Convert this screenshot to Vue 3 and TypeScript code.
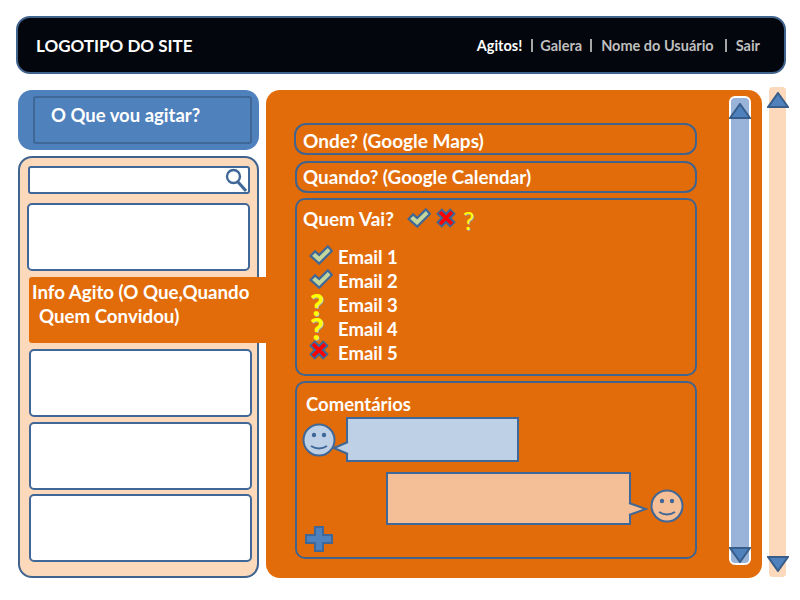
<script setup lang="ts">
// Mockup of the event page: header, left event list, event details with comments
type Status = 'yes' | 'no' | 'maybe'

const guests: { email: string; status: Status }[] = [
  { email: 'Email 1', status: 'yes' },
  { email: 'Email 2', status: 'yes' },
  { email: 'Email 3', status: 'maybe' },
  { email: 'Email 4', status: 'maybe' },
  { email: 'Email 5', status: 'no' },
]
</script>

<template>
  <div class="page">
    <header class="header">
      <div class="logo">LOGOTIPO DO SITE</div>
      <nav class="nav">
        <span class="active">Agitos!</span>
        <i class="sep first"></i>
        <span>Galera</span>
        <i class="sep"></i>
        <span class="user">Nome do Usuário</span>
        <i class="sep wide"></i>
        <span>Sair</span>
      </nav>
    </header>

    <div class="body">
      <aside class="left">
        <div class="new-box">
          <div class="new-inner">O Que vou agitar?</div>
        </div>
        <div class="panel">
          <div class="search">
            <svg class="lens" width="22" height="24" viewBox="0 0 22 24">
              <circle cx="8.5" cy="8.5" r="6.5" fill="none" stroke="#3f6797" stroke-width="2.4" />
              <path d="M13 14 L21 23" stroke="#3f6797" stroke-width="3" />
            </svg>
          </div>
          <div class="item first-item"></div>
          <div class="tab">
            Info Agito (O Que,Quando<br />
            <span class="tab-second">Quem Convidou)</span>
          </div>
          <div class="item"></div>
          <div class="item"></div>
          <div class="item last-item"></div>
        </div>
      </aside>

      <main class="main">
        <div class="content">
          <section class="pill where">Onde? (Google Maps)</section>
          <section class="pill when">Quando? (Google Calendar)</section>
          <section class="box who">
            <div class="who-title">
              <span>Quem Vai?</span>
              <svg class="check top-check" width="24" height="20" viewBox="0 0 26 22">
                <path d="M1.5 12 L6.5 7 L11 11 L20.5 1.5 L25 6.5 L11 20.5 Z" fill="#c3d69b" stroke="#3f6797" stroke-width="2.4" />
              </svg>
              <svg class="cross" width="22" height="22" viewBox="0 0 22 22">
                <path d="M4 4 L18 18 M18 4 L4 18" stroke="#3f6797" stroke-width="8" />
                <path d="M5 5 L17 17 M17 5 L5 17" stroke="#f00" stroke-width="3.6" />
              </svg>
              <span class="question thin">?</span>
            </div>
            <ul class="guests">
              <li v-for="g in guests" :key="g.email" class="guest">
                <span class="guest-icon" :class="g.status">
                  <svg v-if="g.status === 'yes'" width="24" height="20" viewBox="0 0 26 22">
                    <path d="M1.5 12 L6.5 7 L11 11 L20.5 1.5 L25 6.5 L11 20.5 Z" fill="#c3d69b" stroke="#3f6797" stroke-width="2.4" />
                  </svg>
                  <svg v-else-if="g.status === 'no'" width="22" height="22" viewBox="0 0 22 22">
                    <path d="M4 4 L18 18 M18 4 L4 18" stroke="#3f6797" stroke-width="8" />
                    <path d="M5 5 L17 17 M17 5 L5 17" stroke="#f00" stroke-width="3.6" />
                  </svg>
                  <span v-else class="question">?</span>
                </span>
                {{ g.email }}
              </li>
            </ul>
          </section>
          <section class="box comments">
            <div class="comments-title">Comentários</div>
            <div class="comment-row mine">
              <svg class="smile" width="34" height="34" viewBox="0 0 34 34">
                <circle cx="17" cy="17" r="15.5" fill="#bdd0e6" stroke="#3f6797" stroke-width="2" />
                <circle cx="12" cy="12" r="2.2" fill="#3f6797" />
                <circle cx="22" cy="12" r="2.2" fill="#3f6797" />
                <path d="M9 23 Q17 28 25 23" fill="none" stroke="#3f6797" stroke-width="2" />
              </svg>
              <div class="bubble blue">
                <svg class="tail tail-left" width="16" height="16" viewBox="0 0 16 16">
                  <path d="M15 2 L1 8 L15 14" fill="#bdd0e6" stroke="#3f6797" stroke-width="2" />
                </svg>
              </div>
            </div>
            <div class="comment-row theirs">
              <div class="bubble peach">
                <svg class="tail tail-right" width="20" height="16" viewBox="0 0 20 16">
                  <path d="M1 2 L18 8 L1 14" fill="#f4bf96" stroke="#3f6797" stroke-width="2" />
                </svg>
              </div>
              <svg class="smile" width="34" height="34" viewBox="0 0 34 34">
                <circle cx="17" cy="17" r="15.5" fill="#f4bf96" stroke="#3f6797" stroke-width="2" />
                <circle cx="12" cy="12" r="2.2" fill="#3f6797" />
                <circle cx="22" cy="12" r="2.2" fill="#3f6797" />
                <path d="M9 23 Q17 28 25 23" fill="none" stroke="#3f6797" stroke-width="2" />
              </svg>
            </div>
            <svg class="plus" width="28" height="26" viewBox="0 0 28 26">
              <path d="M10 1 H18 V9 H27 V17 H18 V25 H10 V17 H1 V9 H10 Z" fill="#4f81bd" stroke="#3f6797" stroke-width="2" />
            </svg>
          </section>
        </div>
        <div class="inner-scroll">
          <svg class="arrow" width="22" height="16" viewBox="0 0 22 16">
            <path d="M11 1 L21 15 H1 Z" fill="#4f81bd" stroke="#385d8a" stroke-width="2" />
          </svg>
          <svg class="arrow" width="22" height="16" viewBox="0 0 22 16">
            <path d="M11 15 L21 1 H1 Z" fill="#4f81bd" stroke="#385d8a" stroke-width="2" />
          </svg>
        </div>
      </main>

      <div class="outer-scroll">
        <svg class="arrow" width="22" height="16" viewBox="0 0 22 16">
          <path d="M11 1 L21 15 H1 Z" fill="#4f81bd" stroke="#385d8a" stroke-width="2" />
        </svg>
        <svg class="arrow" width="22" height="16" viewBox="0 0 22 16">
          <path d="M11 15 L21 1 H1 Z" fill="#4f81bd" stroke="#385d8a" stroke-width="2" />
        </svg>
      </div>
    </div>
  </div>
</template>

<style>
html,
body {
  margin: 0;
  background: #fff;
}
</style>

<style scoped>
.page {
  width: 800px;
  height: 600px;
  box-sizing: border-box;
  padding: 16px 14px 0 16px;
  font-family: Lato, "Liberation Sans", sans-serif;
  font-weight: 700;
  color: #fff;
  overflow: hidden;
}

/* Header bar */
.header {
  height: 58px;
  box-sizing: border-box;
  background: #03060c;
  border: 2px solid #41648f;
  border-radius: 14px;
  display: flex;
  align-items: center;
  justify-content: space-between;
  padding: 0 24px 0 18px;
}

.logo {
  font-size: 17px;
}

.nav {
  display: flex;
  align-items: center;
  font-size: 14.5px;
  color: #bfbfbf;
}

.nav .active {
  color: #fff;
}

.sep {
  width: 2px;
  height: 13px;
  background: #a6a6a6;
  margin: 0 9px 0 8px;
}

.sep.first {
  margin: 0 7px 0 9px;
}

.sep.wide {
  margin: 0 9px 0 11px;
}

.body {
  display: flex;
  align-items: flex-start;
  margin-top: -3px;
  position: relative;
}

/* Left column */
.left {
  width: 241px;
  margin: 19px 0 0 2px;
  flex: none;
}

.new-box {
  background: #4f81bd;
  height: 60px;
  box-sizing: border-box;
  border-radius: 14px;
  padding: 6px 7px 6px 15px;
}

.new-inner {
  height: 48px;
  box-sizing: border-box;
  border: 2px solid #3f6797;
  border-radius: 3px;
  padding: 6px 16px;
  font-size: 18.5px;
  color: #fff;
}

.panel {
  margin-top: 6px;
  height: 422px;
  box-sizing: border-box;
  background: #fcd9bb;
  border: 2px solid #41648f;
  border-radius: 14px;
  padding: 8px 5px 0 8px;
  display: flex;
  flex-direction: column;
}

.search {
  height: 28px;
  width: 222px;
  box-sizing: border-box;
  background: #fff;
  border: 2px solid #3f6797;
  border-radius: 3px;
  display: flex;
  justify-content: flex-end;
  align-items: center;
  padding-right: 1px;
}

.item {
  width: 223px;
  height: 68px;
  box-sizing: border-box;
  flex: none;
  background: #fff;
  border: 2px solid #3f6797;
  border-radius: 5px;
  margin: 5px 0 0 1px;
}

.item.first-item {
  margin: 9px 0 0 -1px;
}

.item.last-item {
  margin-top: 4px;
}

.tab {
  margin: 6px -14px 1px 1px;
  height: 66px;
  flex: none;
  box-sizing: border-box;
  background: #e36c0a;
  border-radius: 3px 0 0 3px;
  padding: 3px 0 0 3px;
  font-size: 18.7px;
  line-height: 24px;
  position: relative;
}

.tab-second {
  margin-left: 7px;
}

/* Main orange area */
.main {
  width: 496px;
  height: 488px;
  margin: 19px 0 0 7px;
  flex: none;
  box-sizing: border-box;
  background: #e36c0a;
  border-radius: 14px;
  padding: 6px 11px 0 28px;
  display: flex;
  justify-content: space-between;
}

.content {
  width: 403px;
  margin-top: 27px;
  display: flex;
  flex-direction: column;
  gap: 5px;
}

.pill {
  height: 32px;
  box-sizing: border-box;
  border: 2px solid #41648f;
  border-radius: 12px;
  padding: 0 7px;
  font-size: 19px;
  line-height: 32px;
}

.when {
  margin: 1px 0 0 1px;
  line-height: 28px;
  padding-left: 6px;
  font-size: 18.8px;
}

.where {
  padding-left: 7px;
}

.box {
  margin-left: 1px;
  height: 178px;
  box-sizing: border-box;
  border: 2px solid #41648f;
  border-radius: 10px;
  font-size: 18.5px;
}

.who {
  padding: 5px 6px;
}

.who-title {
  display: flex;
  align-items: center;
  height: 26px;
  font-size: 19px;
}

.top-check {
  margin-left: 13px;
}

.cross {
  margin-left: 4px;
}

.question {
  color: #ff0;
  font-size: 30px;
  line-height: 24px;
  font-weight: 900;
  text-shadow: 1px 1px 0 #a6a6a6;
}

.question.thin {
  font-weight: 400;
  font-size: 25px;
  margin: 3px 0 0 6px;
}

.guests {
  list-style: none;
  margin: 14px 0 0;
  padding: 0;
}

.guest {
  height: 24px;
  line-height: 24px;
  display: flex;
  align-items: center;
}

.guest-icon {
  width: 28px;
  flex: none;
  margin-left: 6px;
  display: flex;
  margin-right: 1px;
}

.guest-icon.yes {
  margin-top: -5px;
}

.guest-icon.maybe {
  margin-top: -3px;
  padding-left: 1px;
  box-sizing: border-box;
}

.guest-icon.no {
  margin: -6px 1px 0 5px;
  width: 29px;
}

.comments {
  padding: 8px 0 0 9px;
}

.comments-title {
  line-height: 26px;
}

.comment-row {
  display: flex;
}

.mine {
  height: 44px;
  margin: 0 0 0 -4px;
}

.mine .smile {
  margin-top: 6px;
}

.theirs {
  margin: 11px 0 0 80px;
  height: 52px;
}

.theirs .smile {
  margin: 17px 0 0 19px;
}

.bubble {
  box-sizing: border-box;
  border: 2px solid #3f6797;
  position: relative;
}

.blue {
  width: 173px;
  height: 45px;
  margin-left: 10px;
  background: #bdd0e6;
}

.peach {
  width: 245px;
  height: 53px;
  background: #f4bf96;
}

.tail {
  position: absolute;
}

.tail-left {
  left: -15px;
  top: 21px;
}

.tail-right {
  left: calc(100% - 1px);
  top: 27px;
}

.plus {
  display: block;
  margin: 2px 0 0 -1px;
}

/* Scrollbars */
.inner-scroll,
.outer-scroll {
  box-sizing: border-box;
  display: flex;
  flex-direction: column;
  justify-content: space-between;
  align-items: center;
}

.inner-scroll {
  width: 22px;
  height: 469px;
  background: #9ab3d8;
  border: 2px solid #fff;
  border-radius: 6px;
  padding: 5px 0 0;
}

.outer-scroll {
  width: 17px;
  height: 490px;
  margin: 16px 0 0 7px;
  flex: none;
  background: #fcd9bb;
  border-radius: 4px;
  padding: 5px 0;
}

.arrow {
  flex: none;
  margin: 0 -4px;
}
</style>
